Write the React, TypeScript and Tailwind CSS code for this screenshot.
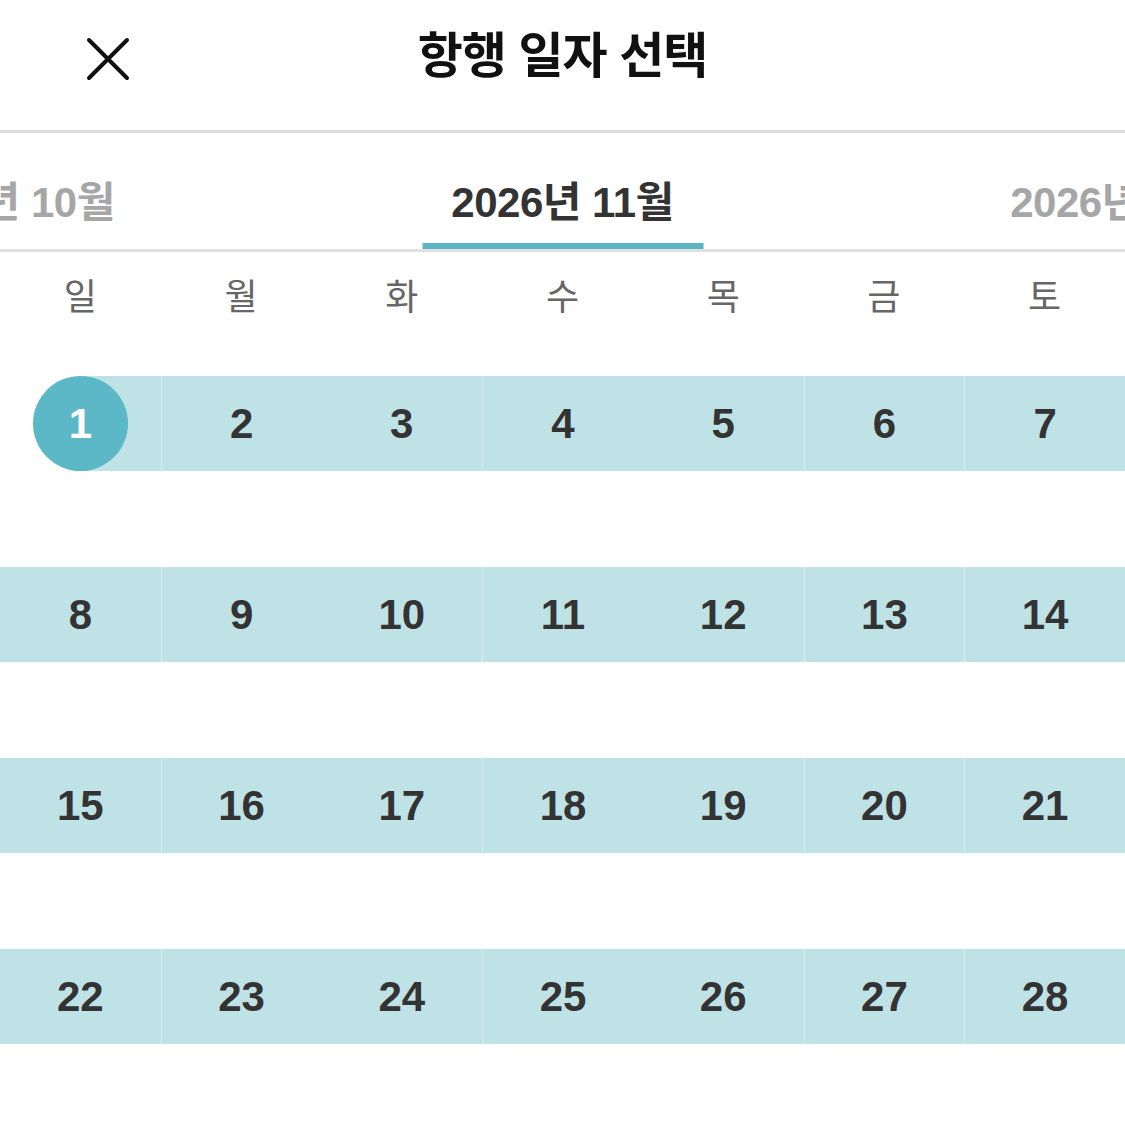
import React from 'react';

const font = { fontFamily: '"Liberation Sans", "Noto Sans CJK KR", sans-serif' };

const weekdays = ['일', '월', '화', '수', '목', '금', '토'];
const weeks = [
  [1, 2, 3, 4, 5, 6, 7],
  [8, 9, 10, 11, 12, 13, 14],
  [15, 16, 17, 18, 19, 20, 21],
  [22, 23, 24, 25, 26, 27, 28],
];
// thin separators only show between some cells
const divided = [1, 3, 5, 6];

const DayCell = ({ day, col }: { day: number; col: number }) => {
  const selected = day === 1;
  return (
    <div
      className={
        'relative flex h-[95px] items-center justify-center ' +
        (divided.includes(col) ? 'border-l border-[#d6eef1] ' : '') +
        (selected ? '' : 'bg-[#bfe2e6]')
      }
    >
      {selected && (
        <>
          <div className="absolute left-1/2 top-0 h-full w-1/2 bg-[#bfe2e6]" />
          <div className="relative flex h-[95px] w-[95px] items-center justify-center rounded-full bg-[#5cb8c6] text-[42px] font-bold text-white">
            {day}
          </div>
        </>
      )}
      {!selected && <span className="text-[42px] font-bold text-[#333333]">{day}</span>}
    </div>
  );
};

export default function App() {
  return (
    <div className="h-[1125px] w-[1125px] overflow-hidden bg-white" style={font}>
      <div className="relative flex h-[130px] items-center justify-center">
        <button className="absolute left-[86px] top-[37px] p-0">
          <svg width="44" height="44" viewBox="0 0 44 44">
            <path d="M3 3 L41 41 M41 3 L3 41" stroke="#111" strokeWidth="4" strokeLinecap="round" />
          </svg>
        </button>
        <h1 className="-mt-[16px] text-[49px] font-bold tracking-[-1px] text-[#111111]">항행 일자 선택</h1>
      </div>
      <div className="h-[3px] bg-[#dddddd]" />
      <div className="relative flex h-[119px] justify-center overflow-hidden border-b-[3px] border-[#e0e0e0]">
        {['2026년 10월', '2026년 11월', '2026년 12월'].map((m, i) => (
          <div key={m} className="relative flex w-[560px] shrink-0 justify-center pt-[38px]">
            <span
              className={
                'text-[42px] font-bold tracking-[-0.5px] ' +
                (i === 1 ? 'text-[#333333]' : 'text-[#a6a6a6]')
              }
            >
              {m}
            </span>
            {i === 1 && (
              <div className="absolute bottom-[-3px] left-1/2 h-[9px] w-[281px] -translate-x-1/2 bg-[#5bb5c4]" />
            )}
          </div>
        ))}
      </div>
      <div className="grid grid-cols-7 pt-[22px] pb-[54px]">
        {weekdays.map((d) => (
          <div key={d} className="text-center text-[36px] leading-[48px] text-[#666666]">
            {d}
          </div>
        ))}
      </div>
      <div className="flex flex-col gap-[96px]">
        {weeks.map((w, r) => (
          <div key={r} className="grid grid-cols-7">
            {w.map((d, c) => (
              <DayCell key={d} day={d} col={c} />
            ))}
          </div>
        ))}
      </div>
    </div>
  );
}
